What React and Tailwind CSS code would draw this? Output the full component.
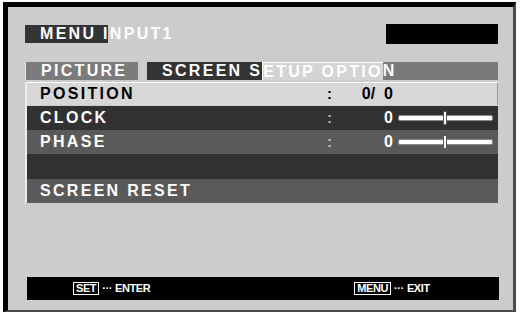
import React from 'react';

const font = { fontFamily: '"Liberation Sans", Arial, sans-serif' };

const Slider = () => (
  <div className="relative ml-[5px] w-[95px] h-[14px] flex items-center">
    <div className="w-full h-[6px] bg-white border border-[#8a8a8a] rounded-[2px]" />
    <div className="absolute left-[45px] top-0 w-[4px] h-[14px] bg-white border border-[#555]" />
  </div>
);

const Row = ({ label, bg, text = 'text-white', colon, value, slider, h = 'h-[24px]', extra = '' }) => (
  <div className={`flex items-center ${h} ${bg} ${extra}`}>
    <div className={`w-[300px] pl-[13px] text-[16px] font-bold tracking-[2.3px] ${text}`}>{label}</div>
    <div className={`w-[6px] text-[15px] font-bold ${colon}`}>{colon ? ':' : ''}</div>
    <div className={`w-[60px] text-right text-[16px] font-bold whitespace-pre ${text}`}>{value}</div>
    {slider && <Slider />}
  </div>
);

export default function App() {
  return (
    <div className="w-[520px] h-[314px] bg-white pt-[2px] pl-[3px]" style={font}>
      <div className="w-[513px] h-[310px] bg-[#cccccc] border-l-[5px] border-t-[5px] border-r-[3px] border-b-[2px] border-l-black border-t-black border-r-[#4a4a4a] border-b-[#4a4a4a] pl-[17px] pr-[15px] pt-[17px] flex flex-col">
        {/* header */}
        <div className="flex items-start justify-between h-[20px]">
          <div className="mt-[1px] w-[83px] h-[18px] bg-[#333333] pl-[15px] whitespace-nowrap text-white text-[16px] font-bold tracking-[2.3px] leading-[18px]">
            MENU INPUT1
          </div>
          <div className="w-[112px] h-[20px] bg-black" />
        </div>

        {/* tabs */}
        <div className="mt-[18px] flex h-[18px] text-white text-[16px] font-bold tracking-[2.3px] leading-[18px] whitespace-pre">
          <div className="w-[113px] bg-[#7b7b7b] pl-[15px] border-l border-[#e6e6e6]">PICTURE</div>
          <div className="w-[9px]" />
          <div className="bg-[#333333] pl-[15px]">SCREEN S</div>
          <div className="bg-[#d4d4d4] border-l border-t border-white">ETUP OPTIO</div>
          <div className="flex-1 bg-[#7a7a7a]">N</div>
        </div>

        {/* rows */}
        <div className="mt-[2px] border-l-2 border-[#ececec] flex flex-col">
          <Row
            label="POSITION"
            bg="bg-[#d7d7d7]"
            text="text-black"
            colon="text-black"
            value="0/  0"
            h="h-[23px]"
            extra="border-t border-r border-t-white border-r-[#9a9a9a]"
          />
          <div className="h-[1px]" />
          <Row label="CLOCK" bg="bg-[#313131]" colon="text-[#b8b8b8]" value="0" slider />
          <Row label="PHASE" bg="bg-[#5a5a5a]" colon="text-[#c0c0c0]" value="0" slider />
          <div className="h-[25px] bg-[#313131]" />
          <Row label="SCREEN RESET" bg="bg-[#5a5a5a]" />
        </div>

        {/* footer */}
        <div className="mt-[74px] ml-[2px] mr-[-1px] h-[23px] bg-black flex items-center text-white text-[11px] font-bold tracking-[-0.4px]">
          <div className="ml-[46px] flex items-center">
            <span className="border border-white px-[2px] leading-[11px]">SET</span>
            <span className="ml-[3px]">···</span>
            <span className="ml-[3px]">ENTER</span>
          </div>
          <div className="ml-[204px] flex items-center">
            <span className="border border-white px-[2px] leading-[11px]">MENU</span>
            <span className="ml-[3px]">···</span>
            <span className="ml-[3px]">EXIT</span>
          </div>
        </div>
      </div>
    </div>
  );
}
